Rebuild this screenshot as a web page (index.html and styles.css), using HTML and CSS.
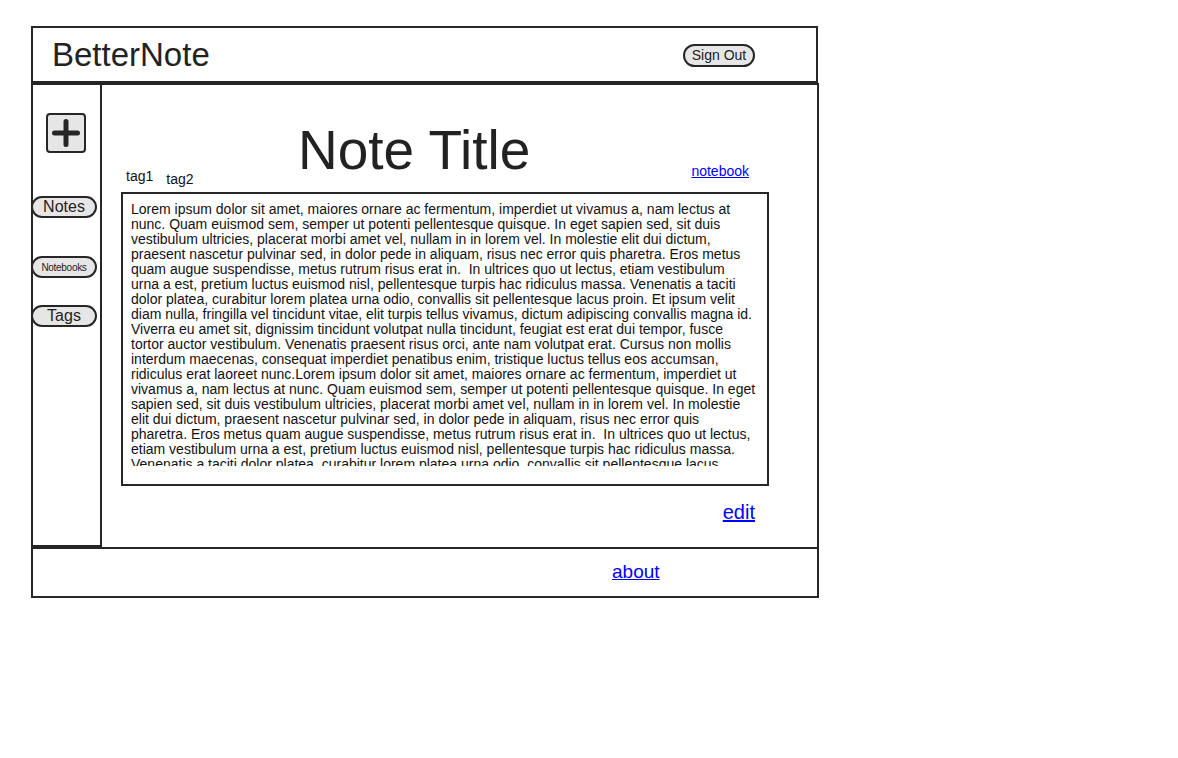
FILE: index.html
```html
<!DOCTYPE html>
<html>
<head>
<meta charset="utf-8">
<title>BetterNote</title>
<link rel="stylesheet" href="styles.css">
</head>
<body>
<div class="app">
  <header class="header">
    <div class="brand">BetterNote</div>
    <button class="pill signout">Sign Out</button>
  </header>
  <div class="middle">
    <nav class="sidebar">
      <button class="plus" aria-label="New note">
        <svg width="36" height="36" viewBox="0 0 36 36"><path d="M18 6.5V29.5M6.5 18H29.5" stroke="#262626" stroke-width="5" stroke-linecap="round" fill="none"/></svg>
      </button>
      <button class="pill nav nav-notes">Notes</button>
      <button class="pill nav nav-notebooks">Notebooks</button>
      <button class="pill nav nav-tags">Tags</button>
    </nav>
    <main class="main">
      <h1 class="title">Note Title</h1>
      <div class="meta">
        <span class="tag tag1">tag1</span>
        <span class="tag tag2">tag2</span>
        <a class="notebook" href="#">notebook</a>
      </div>
      <div class="notebox">
        <div class="notetext">
          <div>Lorem ipsum dolor sit amet, maiores ornare ac fermentum, imperdiet ut vivamus a, nam lectus at</div>
          <div>nunc. Quam euismod sem, semper ut potenti pellentesque quisque. In eget sapien sed, sit duis</div>
          <div>vestibulum ultricies, placerat morbi amet vel, nullam in in lorem vel. In molestie elit dui dictum,</div>
          <div>praesent nascetur pulvinar sed, in dolor pede in aliquam, risus nec error quis pharetra. Eros metus</div>
          <div>quam augue suspendisse, metus rutrum risus erat in.&nbsp; In ultrices quo ut lectus, etiam vestibulum</div>
          <div>urna a est, pretium luctus euismod nisl, pellentesque turpis hac ridiculus massa. Venenatis a taciti</div>
          <div>dolor platea, curabitur lorem platea urna odio, convallis sit pellentesque lacus proin. Et ipsum velit</div>
          <div>diam nulla, fringilla vel tincidunt vitae, elit turpis tellus vivamus, dictum adipiscing convallis magna id.</div>
          <div>Viverra eu amet sit, dignissim tincidunt volutpat nulla tincidunt, feugiat est erat dui tempor, fusce</div>
          <div>tortor auctor vestibulum. Venenatis praesent risus orci, ante nam volutpat erat. Cursus non mollis</div>
          <div>interdum maecenas, consequat imperdiet penatibus enim, tristique luctus tellus eos accumsan,</div>
          <div>ridiculus erat laoreet nunc.Lorem ipsum dolor sit amet, maiores ornare ac fermentum, imperdiet ut</div>
          <div>vivamus a, nam lectus at nunc. Quam euismod sem, semper ut potenti pellentesque quisque. In eget</div>
          <div>sapien sed, sit duis vestibulum ultricies, placerat morbi amet vel, nullam in in lorem vel. In molestie</div>
          <div>elit dui dictum, praesent nascetur pulvinar sed, in dolor pede in aliquam, risus nec error quis</div>
          <div>pharetra. Eros metus quam augue suspendisse, metus rutrum risus erat in.&nbsp; In ultrices quo ut lectus,</div>
          <div>etiam vestibulum urna a est, pretium luctus euismod nisl, pellentesque turpis hac ridiculus massa.</div>
          <div>Venenatis a taciti dolor platea, curabitur lorem platea urna odio, convallis sit pellentesque lacus</div>
        </div>
      </div>
      <div class="actions"><a class="edit" href="#">edit</a></div>
    </main>
  </div>
  <footer class="footer"><a class="about" href="#">about</a></footer>
</div>
</body>
</html>
```

FILE: styles.css
```css
* {
  box-sizing: border-box;
}

html, body {
  margin: 0;
  padding: 0;
  background: #ffffff;
}

body {
  font-family: "Liberation Sans", Arial, Helvetica, sans-serif;
  color: #222222;
  padding: 26px 0 0 31px;
}

.app {
  width: 788px;
}

.header {
  width: 787px;
  height: 57px;
  border: 2px solid #262626;
  display: flex;
  align-items: center;
  justify-content: space-between;
  padding: 0 61px 0 19px;
}

.brand {
  font-size: 33px;
  line-height: 37px;
  color: #222222;
}

.pill {
  font-family: "Liberation Sans", Arial, Helvetica, sans-serif;
  background: #e6e6e6;
  border: 2px solid #262626;
  border-radius: 12px;
  color: #222222;
  padding: 0;
  margin: 0;
  display: flex;
  align-items: center;
  justify-content: center;
}

.signout {
  width: 72px;
  height: 23px;
  font-size: 14px;
  margin-top: 1px;
}

.middle {
  display: flex;
  height: 464px;
}

.sidebar {
  width: 71px;
  border: 2px solid #262626;
  display: flex;
  flex-direction: column;
  align-items: flex-start;
}

.plus {
  width: 40px;
  height: 40px;
  margin: 28px 0 0 13px;
  padding: 0;
  background: #e6e6e6;
  border: 2px solid #262626;
  border-radius: 4px;
  display: flex;
  align-items: center;
  justify-content: center;
}

.plus svg {
  display: block;
}

.nav {
  width: 66px;
  height: 22px;
  margin-left: -2px;
}

.nav-notes {
  font-size: 16px;
  margin-top: 43px;
}

.nav-notebooks {
  font-size: 10px;
  letter-spacing: -0.3px;
  margin-top: 38px;
}

.nav-tags {
  font-size: 16px;
  margin-top: 27px;
}

.main {
  width: 717px;
  border-top: 2px solid #262626;
  border-right: 2px solid #262626;
}

.title {
  margin: 51px 0 0 196px;
  font-size: 55px;
  font-weight: normal;
  line-height: 28px;
  color: #222222;
}

.meta {
  height: 28px;
  display: flex;
  align-items: flex-start;
  padding: 0 68px 0 24px;
  font-size: 14px;
  line-height: 15px;
}

.tag {
  color: #111111;
}

.tag1 {
  margin-top: 5px;
}

.tag2 {
  margin-top: 8px;
  margin-left: 13px;
}

.notebook {
  margin-left: auto;
  color: #0000ff;
  text-decoration: underline;
}

.notebox {
  width: 648px;
  height: 294px;
  margin-left: 19px;
  border: 2px solid #262626;
  padding: 8px 8px 18px 8px;
}

.notetext {
  height: 264px;
  overflow: hidden;
  font-size: 14px;
  line-height: 15px;
  color: #111111;
  white-space: nowrap;
}

.actions {
  display: flex;
  justify-content: flex-end;
  padding-right: 62px;
  margin-top: 15px;
}

.edit,
.about {
  font-size: 20px;
  line-height: 23px;
  color: #0000ff;
  text-decoration: underline;
}

.about {
  font-size: 19px;
}

.footer {
  height: 51px;
  border: 2px solid #262626;
  padding: 11px 0 0 579px;
}
```
